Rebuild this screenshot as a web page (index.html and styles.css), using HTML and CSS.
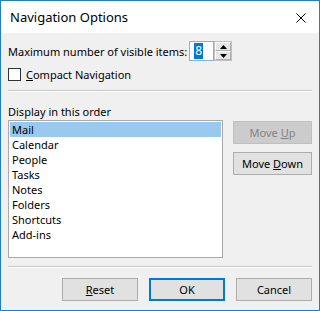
FILE: index.html
```html
<!DOCTYPE html>
<html>
<head>
<meta charset="utf-8">
<link rel="stylesheet" href="styles.css">
</head>
<body>
<div class="window">
  <div class="titlebar">
    <span class="title">Navigation Options</span>
    <svg class="close" width="10" height="10" viewBox="0 0 10 10"><path d="M0.5 0.5 L9.5 9.5 M9.5 0.5 L0.5 9.5" stroke="#000" stroke-width="1"/></svg>
  </div>
  <div class="content">
    <div class="row-max">
      <span class="lbl">Maximum number of visible items:</span>
      <div class="spinner">
        <div class="spin-box"><span class="sel">8</span></div>
        <div class="spin-btns">
          <div class="spin-btn"><svg width="7" height="4" viewBox="0 0 7 4"><path d="M0 4 L3.5 0 L7 4 Z" fill="#000"/></svg></div>
          <div class="spin-btn"><svg width="7" height="4" viewBox="0 0 7 4"><path d="M0 0 L3.5 4 L7 0 Z" fill="#000"/></svg></div>
        </div>
      </div>
    </div>
    <div class="row-check">
      <span class="checkbox"></span>
      <span class="lbl"><u>C</u>ompact Navigation</span>
    </div>
    <div class="sep"></div>
    <div class="order-lbl">Display in this order</div>
    <div class="list-row">
      <ul class="listbox">
        <li class="selected">Mail</li>
        <li>Calendar</li>
        <li>People</li>
        <li>Tasks</li>
        <li>Notes</li>
        <li>Folders</li>
        <li>Shortcuts</li>
        <li>Add-ins</li>
      </ul>
      <div class="side-btns">
        <button class="btn side disabled">Move <u>U</u>p</button>
        <button class="btn side">Move <u>D</u>own</button>
      </div>
    </div>
    <div class="sep sep2"></div>
    <div class="footer">
      <button class="btn foot"><u>R</u>eset</button>
      <button class="btn foot default">OK</button>
      <button class="btn foot">Cancel</button>
    </div>
  </div>
</div>
</body>
</html>
```

FILE: styles.css
```css
* { box-sizing: border-box; }
html, body { margin: 0; padding: 0; }
body {
  font-family: "Noto Sans", "Open Sans", sans-serif;
  font-size: 11px;
  color: #000;
  background: #fff;
}
.window {
  width: 320px;
  height: 311px;
  border: 1px solid #1a7fd4;
  background: #f0f0f0;
  display: flex;
  flex-direction: column;
}
.titlebar {
  height: 32px;
  background: #fff;
  display: flex;
  align-items: center;
  justify-content: space-between;
  padding: 0 13px 0 9px;
}
.title {
  font-size: 13px;
  color: #000;
}
.close { display: block; margin-top: 1px; }
.content {
  padding: 8px 7px 0 6px;
  display: flex;
  flex-direction: column;
}
.row-max {
  display: flex;
  align-items: center;
  height: 20px;
}
.row-max .lbl { margin-left: 1px; margin-right: 2px; }
.spinner { display: flex; height: 20px; }
.spin-box {
  width: 25px;
  height: 20px;
  border: 1px solid #7eb4ea;
  background: #fff;
  padding: 1px 0 0 4px;
  line-height: 16px;
}
.sel {
  background: #0078d7;
  color: #fff;
  padding: 0 1px;
  display: inline-block;
  height: 16px;
  font-size: 12px;
}
.spin-btns {
  width: 18px;
  display: flex;
  flex-direction: column;
  border: 1px solid #c0c0c0;
  background: #e6e6e6;
}
.spin-btn {
  flex: 1;
  display: flex;
  align-items: center;
  justify-content: center;
  border: 1px solid #fff;
  border-right-color: #adadad;
  border-bottom-color: #adadad;
}
.spin-btn svg { display: block; }
.row-check {
  display: flex;
  align-items: center;
  margin-top: 7px;
  height: 13px;
}
.checkbox {
  width: 13px;
  height: 13px;
  border: 1px solid #333;
  background: #fff;
  margin-left: 1px;
  margin-right: 5px;
}
.sep {
  height: 2px;
  border-top: 1px solid #c9c9c9;
  border-bottom: 1px solid #fff;
  margin-top: 9px;
  margin-left: 1px;
}
.order-lbl {
  margin-top: 11px;
  height: 17px;
  line-height: 17px;
  margin-left: 1px;
}
.list-row {
  display: flex;
  margin-top: 0;
}
.listbox {
  list-style: none;
  margin: 0 0 0 1px;
  padding: 1px;
  width: 216px;
  height: 138px;
  border: 1px solid #a9a9a9;
  background: #fff;
}
.listbox li {
  height: 15px;
  line-height: 15px;
  padding-left: 2px;
}
.listbox li.selected {
  background: #99c9ef;
  height: 15px;
}
.side-btns {
  display: flex;
  flex-direction: column;
  gap: 8px;
  margin-left: 10px;
  padding-top: 1px;
}
.btn {
  font-family: inherit;
  font-size: 11px;
  color: #000;
  background: #e1e1e1;
  border: 1px solid #adadad;
  padding: 0;
  height: 23px;
  margin: 0;
}
.btn.side { width: 79px; }
.btn.disabled {
  background: #cccccc;
  border-color: #bfbfbf;
  color: #838383;
}
.sep2 { margin-top: 8px; }
.footer {
  display: flex;
  justify-content: flex-end;
  gap: 11px;
  margin-top: 10px;
}
.btn.foot { width: 76px; }
.btn.default {
  border: 2px solid #0078d7;
}
```
